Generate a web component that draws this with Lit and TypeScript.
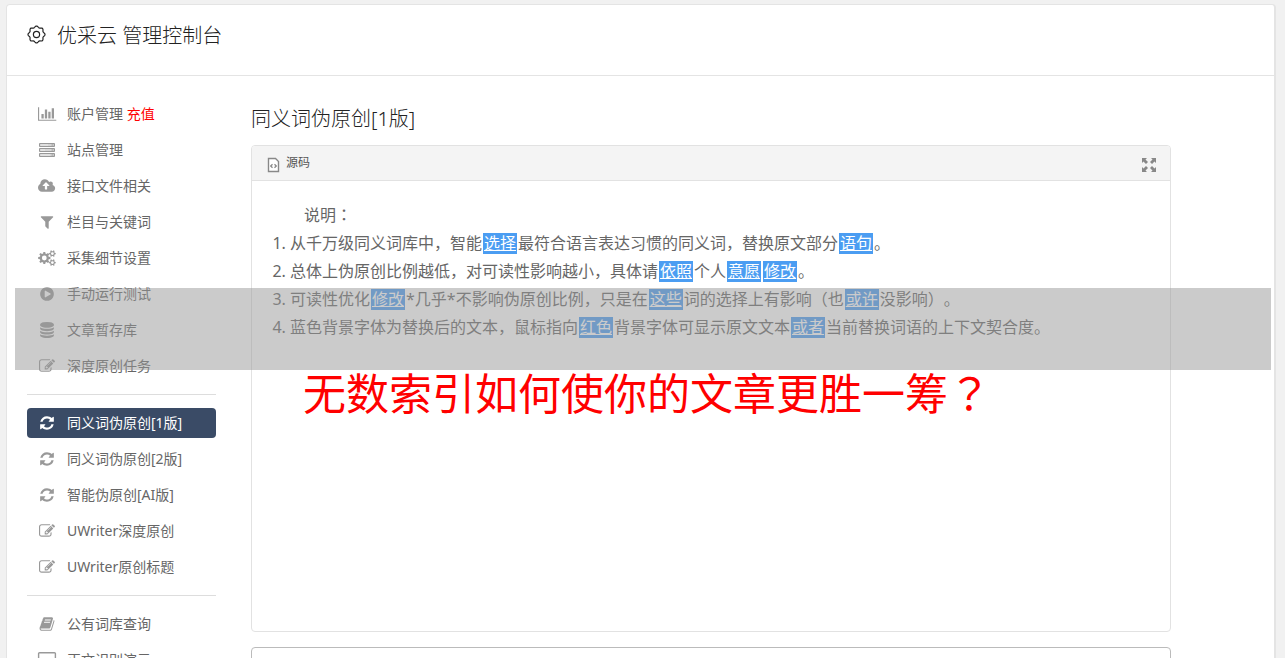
import { LitElement, html, svg, css } from "lit";
import { customElement, property } from "lit/decorators.js";
import { classMap } from "lit/directives/class-map.js";

interface Glyph {
  box: string;
  width: number;
  art: unknown;
}

const solid = (d: string, units = 1792): Glyph => ({
  box: `0 0 ${units} 1792`,
  width: (units / 1792) * 16,
  art: svg`<path d=${d} fill="currentColor" fill-rule="evenodd"></path>`,
});

const toothed = (cx: number, cy: number, r: number, inner: number, teeth: number, depth: number): string => {
  const pts: string[] = [];
  for (let i = 0; i < teeth; i++) {
    const step = (Math.PI * 2) / teeth;
    [[-0.32, r - depth], [-0.2, r], [0.2, r], [0.32, r - depth]].forEach(([o, rad]) => {
      const a = (i + o) * step;
      pts.push(`${(cx + Math.cos(a) * rad).toFixed(2)} ${(cy + Math.sin(a) * rad).toFixed(2)}`);
    });
  }
  return `M${pts.join("L")}ZM${cx - inner} ${cy}a${inner} ${inner} 0 1 0 ${inner * 2} 0a${inner} ${inner} 0 1 0 ${-inner * 2} 0Z`;
};

const scalloped = (cx: number, cy: number, r: number, depth: number, lobes: number): string => {
  const pts: string[] = [];
  for (let i = 0; i < 96; i++) {
    const a = (i / 96) * Math.PI * 2;
    const rad = r + depth * Math.cos(a * lobes);
    pts.push(`${(cx + Math.sin(a) * rad).toFixed(2)} ${(cy - Math.cos(a) * rad).toFixed(2)}`);
  }
  return `M${pts.join("L")}Z`;
};

const glyphs: Record<string, Glyph> = {
  chart: solid("M640 896v512h-256v-512h256zm384-512v1024h-256v-1024h256zm1024 1152v128h-2048v-1536h128v1408h1920zm-640-896v768h-256v-768h256zm384-384v1152h-256v-1152h256z", 2048),
  server: {
    box: "0 0 18 16",
    width: 18,
    art: svg`<g fill="currentColor" fill-opacity="0.4" stroke="currentColor" stroke-width="1"><path d="M1.500 1.500h15v3h-15zM1.500 6.500h15v3h-15zM1.500 11.500h15v3h-15z"></path><path d="M3 3h7M3 8h4M3 13h9" stroke="#fff" stroke-opacity="0.500"></path><path d="M13.500 3h2M13.500 8h2M13.500 13h2"></path></g>`,
  },
  upload: solid("M1280 864q0-14-9-23l-352-352q-9-9-23-9t-23 9l-351 351q-10 12-10 24 0 14 9 23t23 9h224v352q0 13 9.5 22.5t22.5 9.5h192q13 0 22.5-9.5t9.5-22.5v-352h224q13 0 22.5-9.5t9.5-22.5zm640 288q0 159-112.5 271.5t-271.5 112.5h-1088q-185 0-316.5-131.5t-131.5-316.5q0-130 70-240t188-165q-2-30-2-43 0-212 150-362t362-150q156 0 285.5 87t188.5 231q71-62 166-62 106 0 181 75t75 181q0 76-41 138 130 31 213.5 135.5t83.5 238.5z", 1920),
  filter: solid("M1595 295q17 41-14 70l-493 493v742q0 42-39 59-13 5-25 5-27 0-45-19l-256-256q-19-19-19-45v-486l-493-493q-31-29-14-70 17-39 59-39h1280q42 0 59 39z"),
  cogs: {
    box: "0 0 18 16",
    width: 18,
    art: svg`<g fill="currentColor" fill-rule="evenodd"><path d=${toothed(6.3, 8, 6.2, 2.4, 8, 1.6)}></path><path d=${toothed(14.4, 3.6, 3.4, 1.4, 6, 1)}></path><path d=${toothed(14.4, 12.6, 3.4, 1.4, 6, 1)}></path></g>`,
  },
  play: solid("M896 128q209 0 385.5 103t279.5 279.5 103 385.5-103 385.5-279.5 279.5-385.5 103-385.5-103-279.5-279.5-103-385.5 103-385.5 279.5-279.5 385.5-103zm384 823q32-18 32-55t-32-55l-544-320q-31-19-64-1-32 19-32 56v640q0 37 32 56 16 8 32 8 17 0 32-9z"),
  database: solid("M896 768q237 0 443-43t325-127v170q0 69-103 128t-280 93.5-385 34.5-385-34.5-280-93.5-103-128v-170q119 84 325 127t443 43zm0 768q237 0 443-43t325-127v170q0 69-103 128t-280 93.5-385 34.5-385-34.5-280-93.5-103-128v-170q119 84 325 127t443 43zm0-384q237 0 443-43t325-127v170q0 69-103 128t-280 93.5-385 34.5-385-34.5-280-93.5-103-128v-170q119 84 325 127t443 43zm0-1152q208 0 385 34.5t280 93.5 103 128v128q0 69-103 128t-280 93.5-385 34.5-385-34.5-280-93.5-103-128v-128q0-69 103-128t280-93.5 385-34.5z"),
  edit: solid("M888 1184l116-116-152-152-116 116v56h96v96h56zm440-720q-16-16-33 1l-350 350q-17 17-1 33t33-1l350-350q17-17 1-33zm80 594v190q0 119-84.5 203.5t-203.5 84.5h-832q-119 0-203.5-84.5t-84.5-203.5v-832q0-119 84.5-203.5t203.5-84.5h832q63 0 117 25 15 7 18 23 3 17-9 29l-49 49q-14 14-32 8-23-6-45-6h-832q-66 0-113 47t-47 113v832q0 66 47 113t113 47h832q66 0 113-47t47-113v-126q0-13 9-22l64-64q15-15 35-7t20 29zm-96-738l288 288-672 672h-288v-288zm444 132l-92 92-288-288 92-92q28-28 68-28t68 28l152 152q28 28 28 68t-28 68z"),
  refresh: solid("M1639 1056q0 5-1 7-64 268-268 434.5t-478 166.5q-146 0-282.5-55t-243.5-157l-129 129q-19 19-45 19t-45-19-19-45v-448q0-26 19-45t45-19h448q26 0 45 19t19 45-19 45l-137 137q71 66 161 102t187 36q134 0 250-65t186-179q11-17 53-117 8-23 30-23h192q13 0 22.5 9.5t9.5 22.5zm25-800v448q0 26-19 45t-45 19h-448q-26 0-45-19t-19-45 19-45l138-138q-148-137-349-137-134 0-250 65t-186 179q-11 17-53 117-8 23-30 23h-199q-13 0-22.5-9.5t-9.5-22.5v-7q65-268 270-434.5t480-166.5q146 0 284 55.5t245 156.5l130-129q19-19 45-19t45 19 19 45z"),
  book: solid("M1703 478q40 57 18 129l-275 906q-19 64-76.5 107.5t-122.5 43.5h-923q-77 0-148.5-53.5t-99.5-131.5q-24-67-2-127 0-4 3-27t4-37q1-8-3-21.5t-3-19.5q2-11 8-21t16.5-23.5 16.5-23.5q23-38 45-91.5t30-91.5q3-10 .5-30t-.5-28q3-11 17-28t17-23q21-36 42-92t25-90q1-9-2.5-32t.5-28q4-13 22-30.5t22-22.5q19-26 42.5-84.5t27.5-96.5q1-8-3-25.5t-2-26.5q2-8 9-18t18-23 17-21q8-12 16.5-30.5t15-35 16-36 19.5-32 26.5-23.5 36-11.5 47.5 5.5l-1 3q38-9 51-9h761q74 0 114 56t18 130l-274 906q-36 119-71.5 153.5t-128.5 34.5h-869q-27 0-38 15-11 16-1 43 24 70 144 70h923q29 0 56-15.5t35-41.5l300-987q7-22 5-57 38 15 59 43zm-1064 2q-4 13 2 22.5t20 9.5h608q13 0 25.5-9.5t16.5-22.5l21-64q4-13-2-22.5t-20-9.5h-608q-13 0-25.5 9.5t-16.5 22.5zm-83 256q-4 13 2 22.5t20 9.5h608q13 0 25.5-9.5t16.5-22.5l21-64q4-13-2-22.5t-20-9.5h-608q-13 0-25.5 9.5t-16.5 22.5z"),
  screen: {
    box: "0 0 18 16",
    width: 18,
    art: svg`<path d="M1.5.7h15a.9.9 0 0 1 .9.9v9a.9.9 0 0 1-.9.9h-15a.9.9 0 0 1-.9-.9v-9a.9.9 0 0 1 .9-.9zM5 15h8M9 11.5V15" fill="none" stroke="currentColor" stroke-width="1.4"></path>`,
  },
  gear: {
    box: "0 0 20 20",
    width: 20,
    art: svg`<g fill="none" stroke="currentColor" stroke-width="1.2"><path d=${scalloped(9.5, 9.5, 7.8, 0.7, 8)}></path><circle cx="9.5" cy="9.5" r="3.1"></circle></g>`,
  },
  source: {
    box: "0 0 12 16",
    width: 12,
    art: svg`<path d="M1.500 1.500h7L11.500 4.500v10h-10z" fill="#fff" stroke="currentColor" stroke-width="1.4"></path><path d="M5.500 7.200L3.700 9l1.800 1.800M7.500 7.200L9.300 9l-1.800 1.800" fill="none" stroke="currentColor" stroke-width="1.3"></path>`,
  },
  expand: {
    box: "0 0 16 16",
    width: 16,
    art: svg`<path d="M1 1h5L4.500 2.500 7 5 5 7 2.500 4.500 1 6zM15 1v5L13.500 4.500 11 7 9 5l2.500-2.500L10 1zM1 15v-5l1.500 1.500L5 9l2 2-2.500 2.500L6 15zM15 15h-5l1.500-1.500L9 11l2-2 2.500 2.500L15 10z" fill="currentColor"></path>`,
  },
};

@customElement("ui-icon")
class UiIcon extends LitElement {
  static styles = css`
    :host { display: inline-flex; align-items: center; justify-content: center; flex: none; }
    .glyph { display: block; overflow: visible; }
  `;
  @property() name = "edit";
  render() {
    const g = glyphs[this.name];
    const height = this.name === "gear" ? 20 : 16;
    return html`<svg class="glyph" width=${g.width} height=${height} viewBox=${g.box} aria-hidden="true">${g.art}</svg>`;
  }
}

interface Entry {
  icon: string;
  label: string;
  note?: string;
  current?: boolean;
}

const groups: Entry[][] = [
  [
    { icon: "chart", label: "账户管理", note: "充值" },
    { icon: "server", label: "站点管理" },
    { icon: "upload", label: "接口文件相关" },
    { icon: "filter", label: "栏目与关键词" },
    { icon: "cogs", label: "采集细节设置" },
    { icon: "play", label: "手动运行测试" },
    { icon: "database", label: "文章暂存库" },
    { icon: "edit", label: "深度原创任务" },
  ],
  [
    { icon: "refresh", label: "同义词伪原创[1版]", current: true },
    { icon: "refresh", label: "同义词伪原创[2版]" },
    { icon: "refresh", label: "智能伪原创[AI版]" },
    { icon: "edit", label: "UWriter深度原创" },
    { icon: "edit", label: "UWriter原创标题" },
  ],
  [
    { icon: "book", label: "公有词库查询" },
    { icon: "screen", label: "正文识别演示" },
  ],
];

@customElement("side-nav")
class SideNav extends LitElement {
  static styles = css`
    :host { display: block; }
    .list { list-style: none; margin: 0; padding: 0; display: grid; gap: 6px; }
    .list + .list { margin-top: 13px; padding-top: 13px; border-top: 1px solid #ddd; }
    .link {
      display: flex; align-items: center; gap: 10px; height: 30px; padding-left: 10px;
      border-radius: 4px; color: #666; font-size: 14px; line-height: 30px;
      text-decoration: none; white-space: nowrap;
    }
    .link.current { background: #3a4b66; color: #fff; }
    .icon { width: 20px; color: #999; }
    .current .icon { color: #fff; }
    .note { color: #f00; }
  `;
  render() {
    return html`<nav>
      ${groups.map((g) => html`<ul class="list">
        ${g.map((e) => html`<li>
          <a href="#" class=${classMap({ link: true, current: !!e.current })}>
            <ui-icon class="icon" name=${e.icon}></ui-icon>
            <span>${e.label}${e.note ? html` <span class="note">${e.note}</span>` : ""}</span>
          </a></li>`)}
      </ul>`)}
    </nav>`;
  }
}

// Words between braces are synonyms that were swapped in.
const rules = [
  "从千万级同义词库中，智能{选择}最符合语言表达习惯的同义词，替换原文部分{语句}。",
  "总体上伪原创比例越低，对可读性影响越小，具体请{依照}个人{意愿}{修改}。",
  "可读性优化{修改}*几乎*不影响伪原创比例，只是在{这些}词的选择上有影响（也{或许}没影响）。",
  "蓝色背景字体为替换后的文本，鼠标指向{红色}背景字体可显示原文文本{或者}当前替换词语的上下文契合度。",
];

@customElement("rewrite-panel")
class RewritePanel extends LitElement {
  static styles = css`
    :host { display: block; }
    .title { margin: 0 0 12px; font-size: 20px; line-height: 28px; font-weight: 300; color: #222; }
    .editor { border: 1px solid #e2e2e2; border-radius: 4px; background: #fff; overflow: hidden; }
    .bar {
      display: flex; justify-content: space-between; align-items: center; height: 34px;
      padding: 0 13px 0 15px; background: #f4f4f4; border-bottom: 1px solid #e2e2e2;
    }
    .tool {
      display: flex; align-items: center; gap: 7px; padding: 0; border: 0; background: none;
      font: inherit; font-size: 12px; line-height: 16px; color: #555;
    }
    .tool ui-icon { color: #888; padding-top: 3px; }
    .text { min-height: 410px; padding: 20px; font-size: 16px; line-height: 28px; color: #666; }
    .lead { margin: 0; text-indent: 2em; }
    .mark { font-family: "Noto Sans CJK TC", sans-serif; line-height: 1; }
    .rules { margin: 0; padding-left: 18px; text-spacing-trim: space-all; }
    .swap {
      display: inline-block; margin: 0 1px; padding: 0 1px; line-height: 21px;
      background: #4b9df2; color: #fff; text-decoration: underline;
    }
    .result {
      display: block; box-sizing: border-box; width: 100%; height: 120px; margin-top: 15px; padding: 10px;
      border: 1px solid #bbb; border-radius: 4px; background: #fff; resize: none; font: inherit;
    }
  `;
  private marks(text: string) {
    return text.split(/([（）])/).map((part, i) => (i % 2 ? html`<span class="mark">${part}</span>` : part));
  }
  private rule(text: string) {
    return text.split(/[{}]/).map((part, i) => (i % 2 ? html`<span class="swap">${part}</span>` : this.marks(part)));
  }
  render() {
    return html`
      <h2 class="title">同义词伪原创[1版]</h2>
      <section class="editor">
        <div class="bar">
          <button class="tool"><ui-icon name="source"></ui-icon>源码</button>
          <button class="tool" aria-label="全屏"><ui-icon name="expand"></ui-icon></button>
        </div>
        <div class="text">
          <p class="lead">说明<span class="mark">：</span></p>
          <ol class="rules">${rules.map((r) => html`<li>${this.rule(r)}</li>`)}</ol>
        </div>
      </section>
      <textarea class="result" aria-label="结果"></textarea>
    `;
  }
}

@customElement("app-root")
class AppRoot extends LitElement {
  static styles = css`
    :host {
      display: block; position: relative; box-sizing: border-box; height: 100vh; overflow: hidden auto;
      scrollbar-width: none; padding: 4px 9px 20px 6px; background: #f1f1f1;
      font-family: "Noto Sans", "Noto Sans CJK SC", sans-serif;
    }
    .card { border: 1px solid #e4e4e4; border-right-width: 2px; border-radius: 4px; background: #fff; }
    .head {
      display: flex; align-items: center; gap: 10px; height: 62px; padding: 0 20px 8px;
      border-bottom: 1px solid #e4e4e4; color: #222;
    }
    .head ui-icon { padding-bottom: 2px; }
    .brand { margin: 0; font-size: 20px; line-height: 28px; font-weight: 300; }
    .body { display: grid; grid-template-columns: 189px minmax(0, 920px); gap: 35px; padding: 23px 20px; }
    .main { padding-top: 6px; }
    .banner { position: absolute; top: 288px; left: 15px; right: 14px; pointer-events: none; }
    .band { height: 82px; background: rgba(151, 151, 151, 0.5); }
    .headline {
      margin: 0; padding-left: 288px; font-family: "Noto Sans CJK SC", sans-serif;
      font-size: 43px; line-height: 43px; font-weight: 400; color: #f00;
    }
    .mark { font-family: "Noto Sans CJK TC", sans-serif; }
  `;
  render() {
    return html`
      <div class="card">
        <header class="head"><ui-icon name="gear"></ui-icon><h1 class="brand">优采云 管理控制台</h1></header>
        <div class="body">
          <side-nav></side-nav>
          <main class="main"><rewrite-panel></rewrite-panel></main>
        </div>
      </div>
      <div class="banner">
        <div class="band"></div>
        <p class="headline">无数索引如何使你的文章更胜一筹<span class="mark">？</span></p>
      </div>
    `;
  }
}
